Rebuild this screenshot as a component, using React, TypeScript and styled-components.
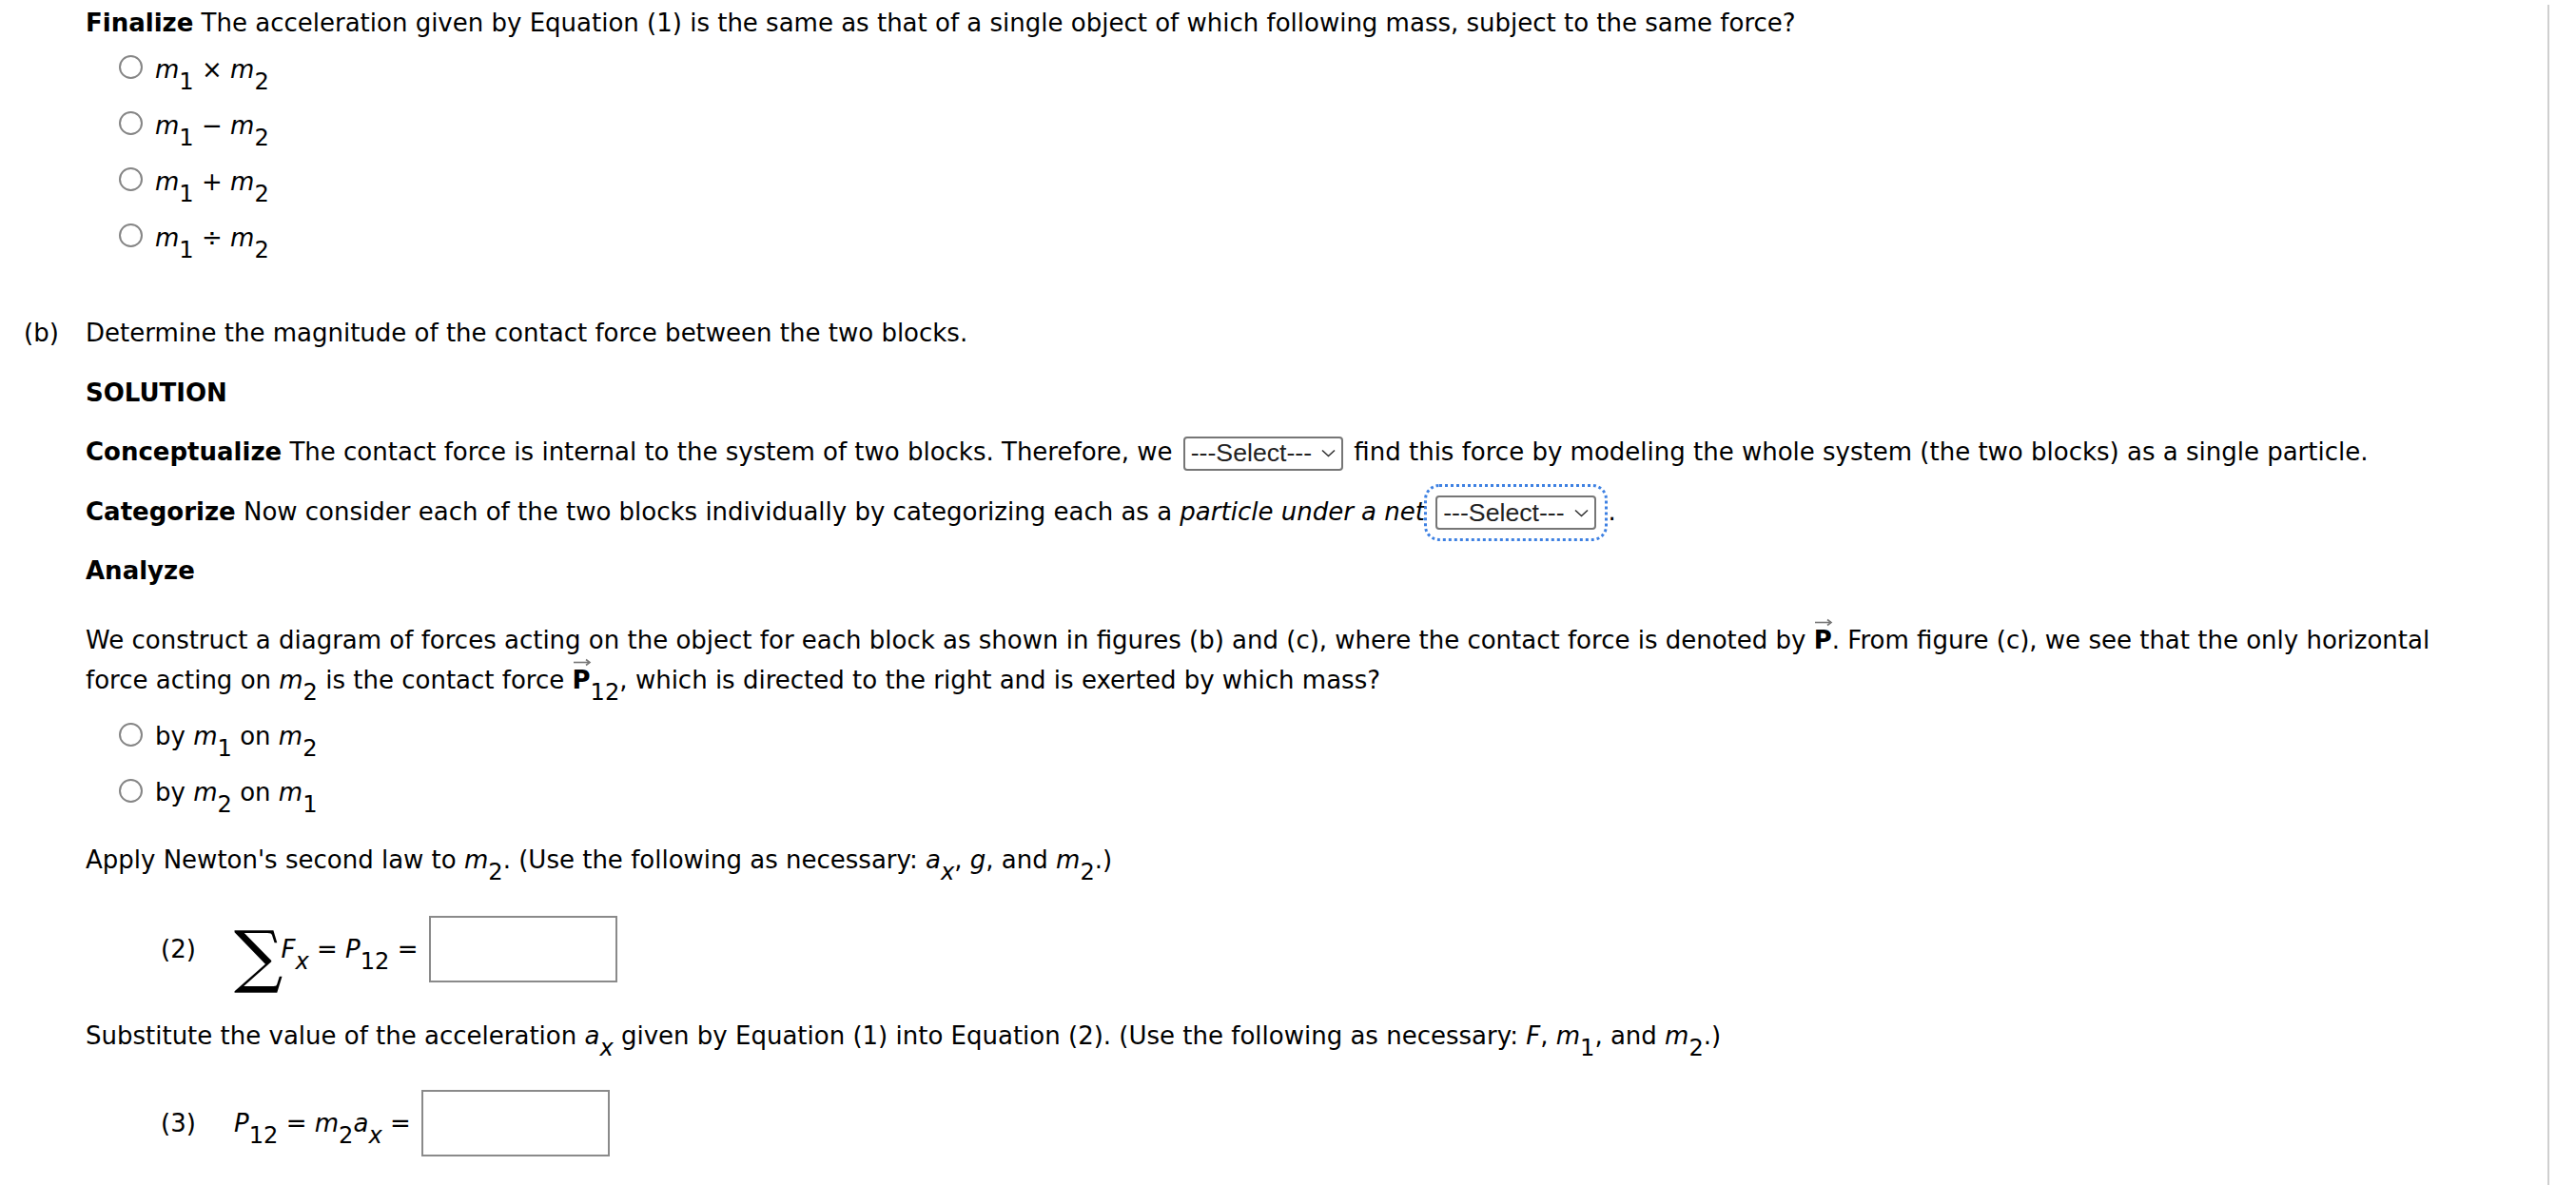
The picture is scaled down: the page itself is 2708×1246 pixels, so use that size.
import React from 'react'
import styled, { createGlobalStyle, css } from 'styled-components'

const GlobalStyle = createGlobalStyle`
  html, body {
    margin: 0;
    padding: 0;
    background: #fff;
  }
  body {
    font-family: "DejaVu Sans", Verdana, sans-serif;
    font-size: 26px;
    color: #000;
  }
`

const Page = styled.div`
  width: 2680px;
  min-height: 1246px;
  box-sizing: border-box;
  border-right: 2px solid #cfcfcf;
  padding-left: 25px;
  line-height: 38.4px;
`

const PartA = styled.div`
  padding-left: 65px;
`

const PartB = styled.div`
  display: grid;
  grid-template-columns: 65px 1fr;
  margin-top: 52px;
`

const PartLabel = styled.div``

const Para = styled.p<{ $mt?: number; $lh?: number }>`
  margin: ${p => p.$mt ?? 24}px 0 0;
  ${p => p.$lh && `line-height: ${p.$lh}px;`}
`

const Strong = styled.b`
  font-weight: bold;
`

const Em = styled.i`
  font-style: italic;
`

const V = styled.i`
  font-style: italic;
`

const Sub = styled.sub<{ $italic?: boolean }>`
  font-size: 0.93em;
  vertical-align: -0.48em;
  line-height: 0;
  font-style: ${p => (p.$italic ? 'italic' : 'normal')};
`

const Choices = styled.div<{ $mt?: number }>`
  margin: ${p => p.$mt ?? 0}px 0 0 35px;
`

const Choice = styled.label`
  display: flex;
  align-items: center;
  height: 59px;
  gap: 13px;
`

const Radio = styled.span`
  flex: none;
  width: 25px;
  height: 25px;
  box-sizing: border-box;
  border: 2px solid #858585;
  border-radius: 50%;
  background: #fff;
  margin-top: -4px;
`

const SelectBox = styled.span<{ $focused?: boolean; $mr?: number }>`
  display: inline-flex;
  align-items: center;
  gap: 10px;
  box-sizing: border-box;
  height: 36px;
  padding: 0 6px 0 6px;
  margin: 0 ${p => p.$mr ?? 3}px 0 3px;
  border: 2px solid #767676;
  border-radius: 4px;
  font-family: "Liberation Sans", Arial, sans-serif;
  font-size: 26.67px;
  line-height: 1;
  color: #222;
  vertical-align: middle;
  ${p =>
    p.$focused &&
    css`
      outline: 3px dotted #3d80e2;
      outline-offset: 9px;
    `}
`

const Chevron = () => (
  <svg width="15" height="9" viewBox="0 0 15 9">
    <polyline points="1,1.5 7.5,7.5 14,1.5" fill="none" stroke="#333" strokeWidth="1.6" />
  </svg>
)

const Select = ({ focused, mr }: { focused?: boolean; mr?: number }) => (
  <SelectBox $focused={focused} $mr={mr}>
    <span>---Select---</span>
    <Chevron />
  </SelectBox>
)

const VecWrap = styled.b`
  position: relative;
  display: inline-block;
  font-weight: bold;
  line-height: 1;
`

const VecArrow = styled.svg`
  position: absolute;
  left: 0;
  top: -10px;
`

const VecP = () => (
  <VecWrap>
    P
    <VecArrow width="20" height="9" viewBox="0 0 20 9">
      <line x1="1" y1="4.5" x2="18" y2="4.5" stroke="#777" strokeWidth="1.6" />
      <polyline points="14,1.5 18,4.5 14,7.5" fill="none" stroke="#777" strokeWidth="1.6" />
    </VecArrow>
  </VecWrap>
)

const EqRow = styled.div<{ $mt: number }>`
  display: flex;
  align-items: center;
  height: 70px;
  margin: ${p => p.$mt}px 0 0 79px;
  white-space: pre;
`

const EqNum = styled.span`
  width: 77px;
`

const Sigma = styled.span`
  font-family: "DejaVu Serif", "Liberation Serif", serif;
  font-size: 72px;
  line-height: 1;
  margin-right: 2px;
  transform: translateY(7px);
  letter-spacing: -4px;
`

const AnswerBox = styled.input`
  width: 198px;
  height: 70px;
  box-sizing: border-box;
  border: 2px solid #8a8a8a;
  margin: 0 0 0 11px;
  padding: 0;
  background: #fff;
`

const m = (n: string) => (
  <>
    <V>m</V>
    <Sub>{n}</Sub>
  </>
)

const App = () => {
  const options = [
    <>{m('1')} × {m('2')}</>,
    <>{m('1')} − {m('2')}</>,
    <>{m('1')} + {m('2')}</>,
    <>{m('1')} ÷ {m('2')}</>,
  ]

  return (
    <>
      <GlobalStyle />
      <Page>
        <PartA>
          <Para $mt={5}>
            <Strong>Finalize</Strong> The acceleration given by Equation (1) is the same as that of a
            single object of which following mass, subject to the same force?
          </Para>
          <Choices>
            {options.map((opt, i) => (
              <Choice key={i}>
                <Radio />
                <span>{opt}</span>
              </Choice>
            ))}
          </Choices>
        </PartA>

        <PartB>
          <PartLabel>(b)</PartLabel>
          <div>
            <Para $mt={0}>Determine the magnitude of the contact force between the two blocks.</Para>
            <Para>
              <Strong>SOLUTION</Strong>
            </Para>
            <Para>
              <Strong>Conceptualize</Strong> The contact force is internal to the system of two blocks.
              Therefore, we <Select /> find this force by modeling the whole system (the two blocks) as a
              single particle.
            </Para>
            <Para>
              <Strong>Categorize</Strong> Now consider each of the two blocks individually by
              categorizing each as a <Em>particle under a net</Em> <Select focused mr={13} />.
            </Para>
            <Para>
              <Strong>Analyze</Strong>
            </Para>
            <Para $mt={32} $lh={42}>
              We construct a diagram of forces acting on the object for each block as shown in figures
              (b) and (c), where the contact force is denoted by <VecP />. From figure (c), we see that
              the only horizontal
              <br />
              force acting on {m('2')} is the contact force <VecP />
              <Sub>12</Sub>, which is directed to the right and is exerted by which mass?
            </Para>
            <Choices $mt={9}>
              <Choice>
                <Radio />
                <span>
                  by {m('1')} on {m('2')}
                </span>
              </Choice>
              <Choice>
                <Radio />
                <span>
                  by {m('2')} on {m('1')}
                </span>
              </Choice>
            </Choices>
            <Para $mt={22}>
              Apply Newton's second law to {m('2')}. (Use the following as necessary: <V>a</V>
              <Sub $italic>x</Sub>, <V>g</V>, and {m('2')}.)
            </Para>
            <EqRow $mt={40}>
              <EqNum>(2)</EqNum>
              <Sigma>∑</Sigma>
              <span>
                <V>F</V>
                <Sub $italic>x</Sub> = <V>P</V>
                <Sub>12</Sub> =
              </span>
              <AnswerBox type="text" />
            </EqRow>
            <Para $mt={37}>
              Substitute the value of the acceleration <V>a</V>
              <Sub $italic>x</Sub> given by Equation (1) into Equation (2). (Use the following as
              necessary: <V>F</V>, {m('1')}, and {m('2')}.)
            </Para>
            <EqRow $mt={38}>
              <EqNum>(3)</EqNum>
              <span>
                <V>P</V>
                <Sub>12</Sub> = {m('2')}
                <V>a</V>
                <Sub $italic>x</Sub> =
              </span>
              <AnswerBox type="text" />
            </EqRow>
          </div>
        </PartB>
      </Page>
    </>
  )
}

export default App
